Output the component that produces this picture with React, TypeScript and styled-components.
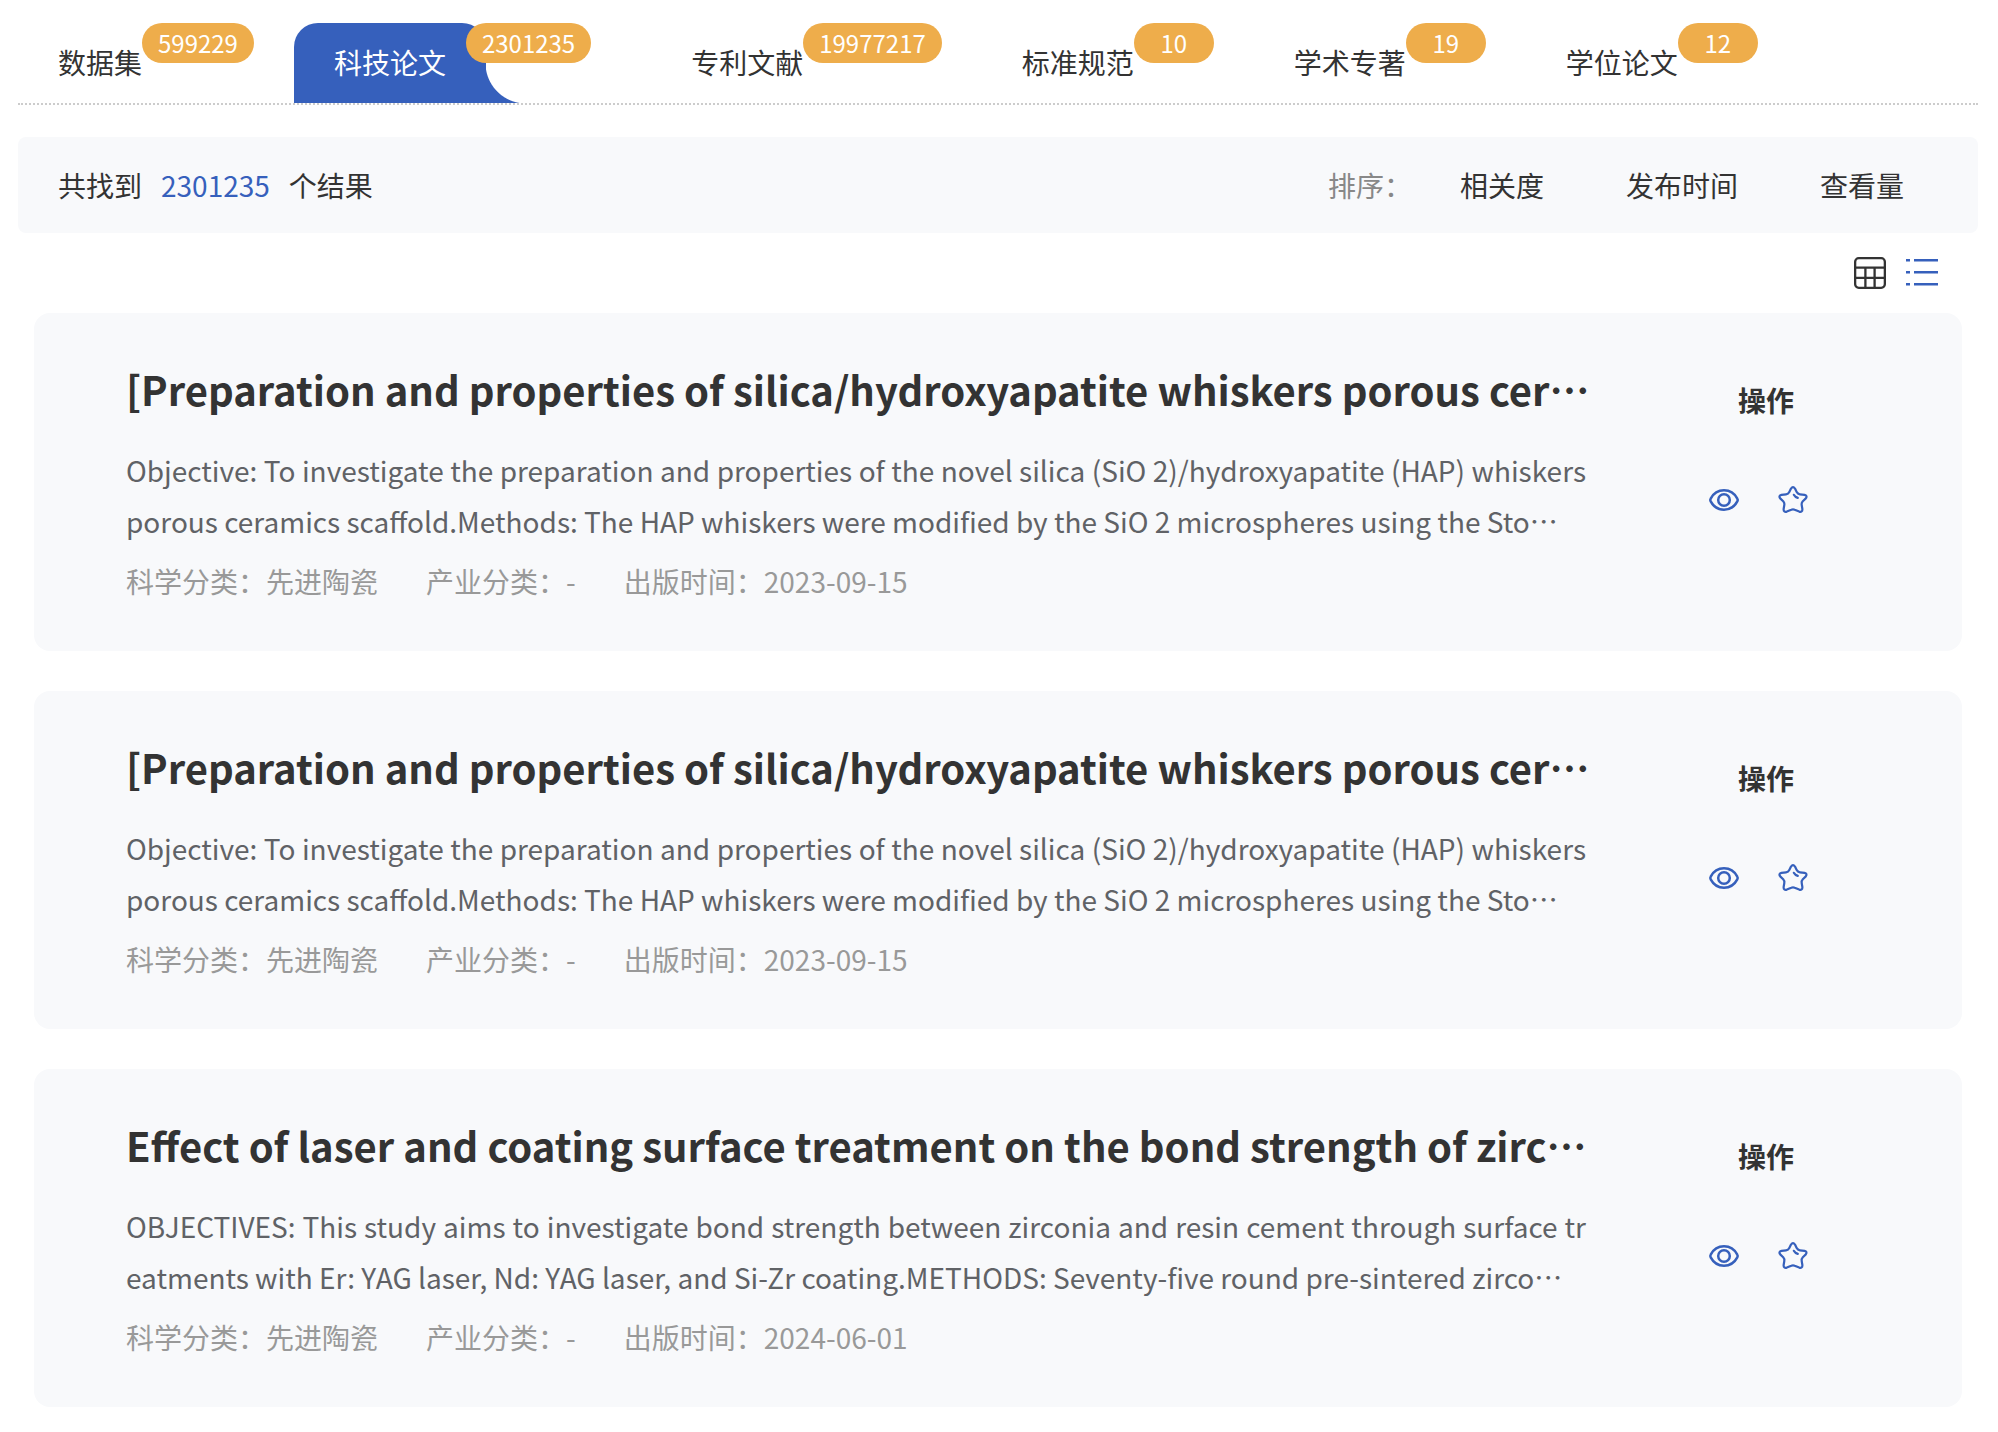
import React, { useState } from "react";
import styled, { createGlobalStyle, css } from "styled-components";

const color = {
  primary: "#3660bc",
  badge: "#eead4b",
  panel: "#f8f9fb",
  text: "#333333",
  body: "#606266",
  muted: "#999999",
  label: "#888888",
};

const GlobalStyle = createGlobalStyle`
  *, *::before, *::after { box-sizing: border-box; }
  body {
    margin: 0;
    background: #ffffff;
    color: ${color.text};
    font-family: "Noto Sans CJK SC", sans-serif;
    font-size: 28px;
  }
  button {
    margin: 0;
    padding: 0;
    border: 0;
    background: none;
    color: inherit;
    font: inherit;
    cursor: pointer;
  }
  h2, h3, p, dl, dt, dd, ul { margin: 0; padding: 0; }
`;

const Page = styled.main`
  padding: 23px 20px 22px 18px;
`;

const Tabs = styled.nav`
  display: flex;
  border-bottom: 2px dotted #cccccc;
`;

const TabLabel = styled.span<{ $active: boolean }>`
  padding-bottom: 2px;
  line-height: 78px;
  white-space: nowrap;
  ${({ $active }) =>
    $active &&
    css`
      position: relative;
      padding: 0 40px 2px;
      border-radius: 24px 24px 0 0;
      background: ${color.primary};
      color: #ffffff;

      &::after {
        content: "";
        position: absolute;
        left: 100%;
        bottom: 0;
        width: 40px;
        height: 40px;
        background: radial-gradient(circle at 100% 0, transparent 40px, ${color.primary} 41px);
      }
    `}
`;

const Badge = styled.span`
  z-index: 1;
  min-width: 80px;
  padding: 0 16px;
  border-radius: 20px;
  background: ${color.badge};
  color: #ffffff;
  font-size: 24px;
  line-height: 40px;
  text-align: center;
`;

const Tab = styled.button<{ $active: boolean }>`
  display: flex;
  align-items: flex-start;
  padding: ${({ $active }) => ($active ? "0 60px 0 0" : "0 40px")};

  ${Badge} {
    margin-left: ${({ $active }) => ($active ? "-20px" : "0")};
  }
`;

const ResultBar = styled.section`
  display: flex;
  align-items: center;
  justify-content: space-between;
  margin-top: 32px;
  padding: 0 74px 0 40px;
  border-radius: 8px;
  background: ${color.panel};
  line-height: 96px;
`;

const Total = styled.strong`
  margin: 0 19px;
  color: ${color.primary};
  font-weight: 400;
`;

const Sorts = styled.div`
  display: flex;
  gap: 82px;
`;

const SortArea = styled.div`
  display: flex;
  gap: 48px;
`;

const SortLabel = styled.span`
  color: ${color.label};
`;

const ViewSwitch = styled.div`
  display: flex;
  justify-content: flex-end;
  gap: 20px;
  padding: 24px 40px;
`;

const IconButton = styled.button<{ $active?: boolean }>`
  display: flex;
  color: ${({ $active }) => ($active ? color.primary : color.text)};
`;

const List = styled.ul`
  display: flex;
  flex-direction: column;
  gap: 40px;
  padding: 0 16px;
  list-style: none;
`;

const Card = styled.li`
  display: flex;
  justify-content: space-between;
  padding: 40px 92px 46px;
  border-radius: 16px;
  background: ${color.panel};
`;

const Info = styled.article`
  flex: 1;
  min-width: 0;
`;

const Title = styled.h2`
  overflow: hidden;
  font-size: 40px;
  font-weight: 700;
  line-height: 72px;
  text-overflow: ellipsis;
  white-space: nowrap;
`;

const Summary = styled.p`
  display: -webkit-box;
  overflow: hidden;
  margin-top: 20px;
  padding-right: 4px;
  color: ${color.body};
  line-height: 51px;
  text-align: justify;
  word-break: break-all;
  -webkit-box-orient: vertical;
  -webkit-line-clamp: 2;
`;

const Meta = styled.dl`
  display: flex;
  gap: 48px;
  margin-top: 10px;
  color: ${color.muted};
  line-height: 48px;
`;

const MetaItem = styled.div`
  display: flex;
`;

const Actions = styled.div`
  display: flex;
  flex-direction: column;
  align-items: center;
  width: 208px;
  margin-left: 72px;
  padding-top: 24px;
`;

const ActionTitle = styled.h3`
  font-size: 28px;
  line-height: 46px;
`;

const ActionIcons = styled.div`
  display: flex;
  gap: 37px;
  margin-top: 61px;
  padding-right: 15px;
`;

const GridIcon = () => (
  <svg width="32" height="32" viewBox="0 0 32 32" fill="none" stroke="currentColor" strokeWidth="2.3">
    <rect x="1.15" y="1.15" width="29.7" height="29.7" rx="3.6" />
    <path d="M1 10.600h30M1 20.800h30M11.400 10.600V31M20.600 10.600V31" />
  </svg>
);

const ListIcon = () => (
  <svg width="32" height="32" viewBox="0 0 32 32" fill="none" stroke="currentColor" strokeWidth="2.6">
    <path d="M0 3.300h4M8 3.300h24M0 15.300h4M8 15.300h24M0 27.300h4M8 27.300h24" />
  </svg>
);

const EyeIcon = () => (
  <svg width="32" height="32" viewBox="0 0 32 32" fill="none" stroke="currentColor" strokeWidth="2.5">
    <path d="M2.700 14.600C5.500 9.300 10.200 6.300 16 6.300s10.500 3 13.300 8.300q.8 1.400 0 2.800C26.500 22.700 21.800 25.700 16 25.700S5.500 22.700 2.700 17.400q-.8-1.400 0-2.800z" />
    <circle cx="16" cy="16" r="5.800" />
  </svg>
);

const StarIcon = () => (
  <svg width="32" height="32" viewBox="0 0 32 32" fill="none" stroke="currentColor" strokeWidth="2.2" strokeLinejoin="round" strokeLinecap="round">
    <path d="M14 4.600q2-2.800 4 0l1.700 3.500q1 2 3.200 2.200l4.600.6q3.200.9 1.300 3.500l-3 2.900q-1.500 1.600-1.100 3.700l.7 4.200q0 3.300-3.200 2.400L17.700 25.700q-1.700-.8-3.400 0l-4.500 1.900q-3.200.9-3.200-2.400l.7-4.200q.4-2.100-1.100-3.700l-3-2.900q-1.900-2.600 1.300-3.500l4.600-.6q2.200-.2 3.200-2.200z" />
    <path d="M16.800 10.800q1.200 2.300 4 3.100" />
  </svg>
);

interface TabItem {
  name: string;
  count: number;
}

const tabs: TabItem[] = [
  { name: "数据集", count: 599229 },
  { name: "科技论文", count: 2301235 },
  { name: "专利文献", count: 19977217 },
  { name: "标准规范", count: 10 },
  { name: "学术专著", count: 19 },
  { name: "学位论文", count: 12 },
];

const sorts = ["相关度", "发布时间", "查看量"];

interface Paper {
  title: string;
  summary: string;
  science: string;
  industry: string;
  published: string;
}

const whiskers: Paper = {
  title: "[Preparation and properties of silica/hydroxyapatite whiskers porous cer…",
  summary:
    "Objective: To investigate the preparation and properties of the novel silica (SiO 2)/hydroxyapatite (HAP) whiskers porous ceramics scaffold.Methods: The HAP whiskers were modified by the SiO 2 microspheres using the Sto…",
  science: "先进陶瓷",
  industry: "-",
  published: "2023-09-15",
};

const papers: Paper[] = [
  whiskers,
  whiskers,
  {
    title: "Effect of laser and coating surface treatment on the bond strength of zirc…",
    summary:
      "OBJECTIVES: This study aims to investigate bond strength between zirconia and resin cement through surface treatments with Er: YAG laser, Nd: YAG laser, and Si-Zr coating.METHODS: Seventy-five round pre-sintered zirco…",
    science: "先进陶瓷",
    industry: "-",
    published: "2024-06-01",
  },
];

const PaperCard = ({ paper }: { paper: Paper }) => (
  <Card>
    <Info>
      <Title>{paper.title}</Title>
      <Summary>{paper.summary}</Summary>
      <Meta>
        <MetaItem>
          <dt>科学分类：</dt>
          <dd>{paper.science}</dd>
        </MetaItem>
        <MetaItem>
          <dt>产业分类：</dt>
          <dd>{paper.industry}</dd>
        </MetaItem>
        <MetaItem>
          <dt>出版时间：</dt>
          <dd>{paper.published}</dd>
        </MetaItem>
      </Meta>
    </Info>
    <Actions>
      <ActionTitle>操作</ActionTitle>
      <ActionIcons>
        <IconButton type="button" aria-label="查看" $active>
          <EyeIcon />
        </IconButton>
        <IconButton type="button" aria-label="收藏" $active>
          <StarIcon />
        </IconButton>
      </ActionIcons>
    </Actions>
  </Card>
);

export default function App() {
  const [tab, setTab] = useState(1);
  const [view, setView] = useState<"grid" | "list">("list");

  return (
    <Page lang="zh-CN">
      <GlobalStyle />
      <Tabs>
        {tabs.map((item, i) => (
          <Tab key={item.name} type="button" $active={i === tab} onClick={() => setTab(i)}>
            <TabLabel $active={i === tab}>{item.name}</TabLabel>
            <Badge>{item.count}</Badge>
          </Tab>
        ))}
      </Tabs>
      <ResultBar>
        <p>
          共找到<Total>{tabs[tab].count}</Total>个结果
        </p>
        <SortArea>
          <SortLabel>排序：</SortLabel>
          <Sorts>
            {sorts.map((name) => (
              <button key={name} type="button">
                {name}
              </button>
            ))}
          </Sorts>
        </SortArea>
      </ResultBar>
      <ViewSwitch>
        <IconButton type="button" aria-label="表格视图" $active={view === "grid"} onClick={() => setView("grid")}>
          <GridIcon />
        </IconButton>
        <IconButton type="button" aria-label="列表视图" $active={view === "list"} onClick={() => setView("list")}>
          <ListIcon />
        </IconButton>
      </ViewSwitch>
      <List>
        {papers.map((paper, i) => (
          <PaperCard key={i} paper={paper} />
        ))}
      </List>
    </Page>
  );
}
